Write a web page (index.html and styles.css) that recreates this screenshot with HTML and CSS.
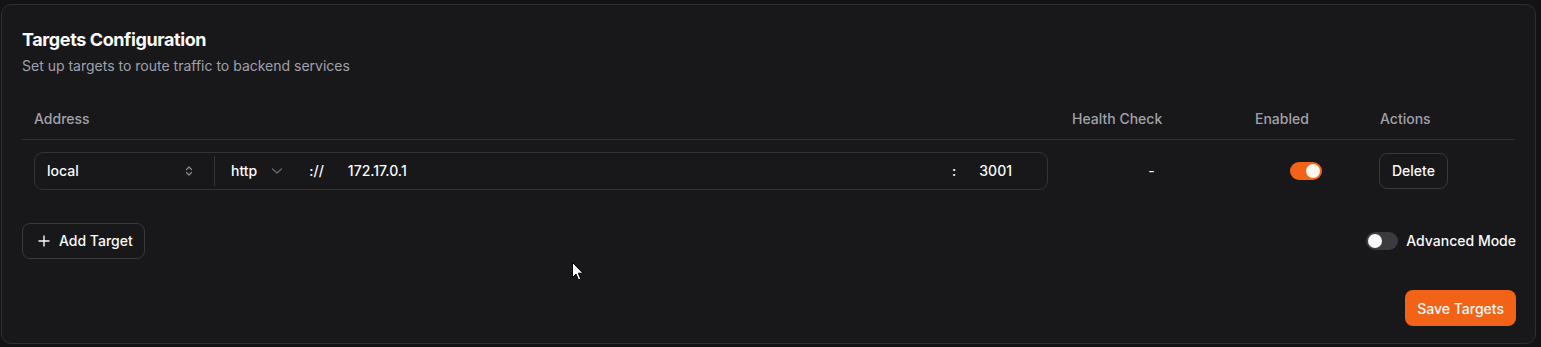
FILE: index.html
```html
<!DOCTYPE html>
<html>
<head>
<meta charset="utf-8">
<link rel="stylesheet" href="styles.css">
</head>
<body>
<div class="card">
  <div class="card-header">
    <h2 class="title">Targets Configuration</h2>
    <p class="subtitle">Set up targets to route traffic to backend services</p>
  </div>
  <table class="targets">
    <thead>
      <tr>
        <th class="col-address">Address</th>
        <th class="col-health">Health Check</th>
        <th class="col-enabled">Enabled</th>
        <th class="col-actions">Actions</th>
      </tr>
    </thead>
    <tbody>
      <tr>
        <td class="col-address">
          <div class="addr-group">
            <div class="seg seg-site">
              <span>local</span>
              <svg class="ico-updown" width="10" height="12" viewBox="0 0 10 12" fill="none" stroke="#8a8a93" stroke-width="1.2" stroke-linecap="round" stroke-linejoin="round"><path d="M2.5 4.5L5 2L7.5 4.5"/><path d="M2.5 7.5L5 10L7.5 7.5"/></svg>
            </div>
            <div class="divider"></div>
            <div class="seg seg-proto">
              <span>http</span>
              <svg class="ico-down" width="12" height="8" viewBox="0 0 12 8" fill="none" stroke="#6b6b73" stroke-width="1.2" stroke-linecap="round" stroke-linejoin="round"><path d="M1.5 2L6 6L10.5 2"/></svg>
            </div>
            <span class="sep">://</span>
            <span class="host">172.17.0.1</span>
            <span class="colon">:</span>
            <span class="port">3001</span>
          </div>
        </td>
        <td class="col-health center">-</td>
        <td class="col-enabled center"><span class="switch on"><span class="knob"></span></span></td>
        <td class="col-actions"><button class="btn btn-outline btn-delete">Delete</button></td>
      </tr>
    </tbody>
  </table>
  <div class="toolbar">
    <button class="btn btn-outline btn-add">
      <svg width="12" height="12" viewBox="0 0 12 12" fill="none" stroke="#fafafa" stroke-width="1.4" stroke-linecap="round"><path d="M6 1V11"/><path d="M1 6H11"/></svg>
      <span>Add Target</span>
    </button>
    <div class="advanced">
      <span class="switch off"><span class="knob"></span></span>
      <span>Advanced Mode</span>
    </div>
  </div>
  <div class="footer">
    <button class="btn btn-primary">Save Targets</button>
  </div>
</div>
<svg class="cursor" width="12" height="19" viewBox="0 0 12 19"><path d="M0.5 0.5V15.5L4 12L6.5 18L8.8 17L6.3 11.2H11L0.5 0.5Z" fill="#fff" stroke="#000" stroke-width="1"/></svg>
</body>
</html>
```
FILE: styles.css
```css
* { box-sizing: border-box; }
html, body { margin: 0; background: #131315; }
body {
  padding: 4px 5px 0 1px;
  font-family: Inter, "Noto Sans", sans-serif;
  color: #fafafa;
  height: 347px;
  overflow: hidden;
  position: relative;
}
.card {
  background: #18181b;
  border: 1px solid #2e2e33;
  border-radius: 10px;
  padding: 20px 20px 17px 20px;
  height: 340px;
  display: flex;
  flex-direction: column;
}
.card-header { padding-top: 3px; }
.title {
  margin: 0;
  font-size: 18px;
  line-height: 24px;
  font-weight: 700;
  letter-spacing: -0.4px;
}
.subtitle {
  margin: 4px 0 0;
  font-size: 14px;
  line-height: 20px;
  color: #a1a1aa;
}
.targets {
  width: 100%;
  border-collapse: collapse;
  margin-top: 23px;
}
.targets th {
  height: 40px;
  text-align: left;
  font-weight: 500;
  font-size: 14px;
  color: #a1a1aa;
  padding: 0 12px;
  border-bottom: 1px solid #2e2e33;
}
.targets td {
  padding: 12px 12px;
  font-size: 14px;
  vertical-align: middle;
}
.col-health { width: 183px; }
.col-enabled { width: 125px; }
.col-actions { width: 147px; }
.center { text-align: center; }
.addr-group {
  display: flex;
  align-items: center;
  height: 38px;
  border: 1px solid #333338;
  border-radius: 9px;
  font-size: 14px;
  font-weight: 500;
}
.seg { display: flex; align-items: center; height: 100%; }
.seg-site { width: 179px; padding: 0 20px 0 12px; justify-content: space-between; }
.divider { width: 1px; height: 30px; background: #333338; }
.seg-proto { padding-left: 16px; }
.ico-down { margin-left: 14px; }
.sep { margin-left: 26px; }
.host { margin-left: 24px; flex: 1; }
.colon { margin-right: 23px; }
.port { margin-right: 35px; }
.switch {
  display: inline-flex;
  align-items: center;
  width: 32px;
  height: 18px;
  border-radius: 9px;
  padding: 2px;
  vertical-align: middle;
}
.switch .knob { width: 14px; height: 14px; border-radius: 50%; }
.switch.on { background: #f26318; justify-content: flex-end; }
.switch.on .knob { background: #fff6ed; }
.switch.off { background: #3a3a3f; }
.switch.off .knob { background: #fafafa; }
.btn {
  font-family: inherit;
  font-size: 14px;
  font-weight: 500;
  color: #fafafa;
  border-radius: 8px;
  cursor: pointer;
}
.btn-outline {
  background: #18181b;
  border: 1px solid #38383d;
}
.btn-delete { height: 36px; padding: 0 12px; margin-left: -1px; }
.toolbar {
  margin-top: 21px;
  display: flex;
  justify-content: space-between;
  align-items: center;
}
.btn-add {
  height: 36px;
  padding: 0 11px 0 15px;
  display: inline-flex;
  align-items: center;
  gap: 9px;
}
.advanced {
  display: flex;
  align-items: center;
  gap: 8px;
  font-size: 14px;
  font-weight: 500;
  margin-right: -1px;
}
.footer {
  margin-top: auto;
  display: flex;
  justify-content: flex-end;
}
.btn-primary {
  background: #f26318;
  border: none;
  height: 36px;
  padding: 0 12px;
  margin-right: -1px;
}
.cursor { position: absolute; left: 572px; top: 262px; }
```
